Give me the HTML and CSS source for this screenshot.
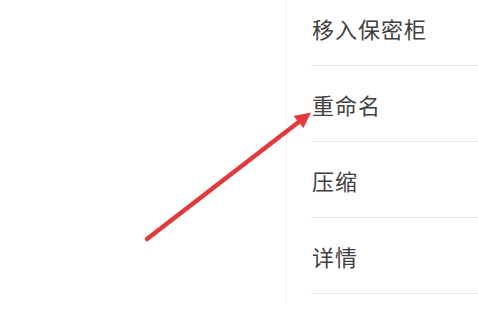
FILE: index.html
```html
<!DOCTYPE html>
<html lang="zh-CN">
<head>
<meta charset="utf-8">
<title>Menu</title>
<link rel="stylesheet" href="styles.css">
</head>
<body>
<div class="page">
  <div class="panel">
    <ul class="menu">
      <li class="item"><span class="label">移入保密柜</span></li>
      <li class="item"><span class="label">重命名</span></li>
      <li class="item"><span class="label">压缩</span></li>
      <li class="item"><span class="label">详情</span></li>
    </ul>
  </div>
  <svg class="arrow" width="478" height="314" viewBox="0 0 478 314">
    <line x1="147" y1="239" x2="300" y2="121" stroke="#e23a3c" stroke-width="4.5" stroke-linecap="round"/>
    <polygon points="311,112.5 303.5,128 293.5,116" fill="#e23a3c"/>
  </svg>
</div>
</body>
</html>
```
FILE: styles.css
```css
html, body {
  margin: 0;
  padding: 0;
  background: #ffffff;
}
.page {
  position: relative;
  width: 478px;
  height: 314px;
  overflow: hidden;
  background: #ffffff;
}
.panel {
  margin-left: 286px;
  height: 100%;
  border-left: 1px solid #f1f1f1;
  background: #ffffff;
}
.menu {
  list-style: none;
  margin: -10px 0 0 0;
  padding: 0;
}
.item {
  margin-left: 24px;
  height: 75px;
  border-bottom: 1px solid #e9e9e9;
  display: flex;
  align-items: center;
}
.label {
  padding-left: 1px;
  font-family: "Noto Sans CJK SC", "Noto Sans", sans-serif;
  font-size: 22px;
  color: #404040;
  letter-spacing: 1px;
}
.arrow {
  position: absolute;
  left: 0;
  top: 0;
}
```
